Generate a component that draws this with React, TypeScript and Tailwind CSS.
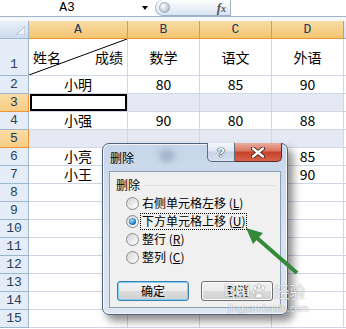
import React from 'react';

const cjk = "font-['Noto_Sans_CJK_SC',sans-serif]";
const mono = "font-['Liberation_Mono',monospace]";

const cols = [
  { l: 'A', w: 'w-[99px]' },
  { l: 'B', w: 'w-[72px]' },
  { l: 'C', w: 'w-[72px]' },
  { l: 'D', w: 'w-[72px]' },
];

type Row = { n: number; cells: string[]; sel?: boolean };

const rows: Row[] = [
  { n: 2, cells: ['小明', '80', '85', '90'] },
  { n: 3, cells: ['', '', '', ''], sel: true },
  { n: 4, cells: ['小强', '90', '80', '88'] },
  { n: 5, cells: ['', '', '', ''], sel: true },
  { n: 6, cells: ['小亮', '', '', '85'] },
  { n: 7, cells: ['小王', '', '', '90'] },
  { n: 8, cells: ['', '', '', ''] },
  { n: 9, cells: ['', '', '', ''] },
  { n: 10, cells: ['', '', '', ''] },
  { n: 11, cells: ['', '', '', ''] },
  { n: 12, cells: ['', '', '', ''] },
  { n: 13, cells: ['', '', '', ''] },
  { n: 14, cells: ['', '', '', ''] },
  { n: 15, cells: ['', '', '', ''] },
];

const options = [
  { t: '右侧单元格左移', k: 'L' },
  { t: '下方单元格上移', k: 'U', sel: true },
  { t: '整行', k: 'R' },
  { t: '整列', k: 'C' },
];

function RowHead({ n, sel, tall }: { n: number; sel?: boolean; tall?: boolean }) {
  return (
    <div
      className={`w-[29px] shrink-0 flex justify-center border-r border-b ${mono} text-[13px] ${
        sel
          ? 'bg-linear-to-b from-[#fadca4] to-[#f6cd84] border-[#f29436] text-[#1f3550]'
          : 'bg-[#e4ecf7] border-[#9eb6ce] text-[#2a3f5a]'
      } ${tall ? 'items-end pb-[1px]' : 'items-center'}`}
    >
      {n}
    </div>
  );
}

export default function App() {
  return (
    <div className={`relative w-[346px] h-[329px] overflow-hidden bg-white ${cjk}`}>
      {/* formula bar */}
      <div className="flex h-[17px] border-b border-[#a5b5c8] bg-white">
        <div className={`w-[134px] flex items-center justify-center ${mono} text-[13px] text-black`}>A3</div>
        <div className="w-[21px] flex items-center justify-center">
          <div className="w-0 h-0 border-l-[3px] border-r-[3px] border-t-[4px] border-l-transparent border-r-transparent border-t-black" />
        </div>
        <div className="w-[76px] flex items-center justify-between rounded-l-[9px] border border-t-0 border-[#9fb2c9] bg-linear-to-b from-white to-[#d9e4f1] pl-[3px] pr-[4px]">
          <div className="w-[11px] h-[11px] rounded-full border border-[#9aa9ba] bg-[radial-gradient(circle_at_35%_35%,#ffffff,#c3cedb_60%,#93a2b4)]" />
          <span className="font-['Liberation_Serif',serif] italic font-bold text-[13px] leading-none text-[#555]">
            f<span className="text-[10px]">x</span>
          </span>
        </div>
        <div className="flex-1" />
      </div>
      <div className="h-[4px] bg-[#f5f7fb]" />

      {/* column headers */}
      <div className="flex h-[18px]">
        <div className="w-[29px] relative border-r border-b border-[#9eb6ce] bg-linear-to-b from-[#e9eff8] to-[#cddbee]">
          <svg className="absolute right-[3px] bottom-[3px]" width="9" height="9" viewBox="0 0 9 9">
            <polygon points="9,0 9,9 0,9" fill="#eef2f7" stroke="#a9bbd0" strokeWidth="1" />
          </svg>
        </div>
        {cols.map((c) => (
          <div
            key={c.l}
            className={`${c.w} shrink-0 flex items-center justify-center border-r border-b border-[#f29436] bg-linear-to-b from-[#f9dca6] to-[#f2c46e] ${mono} text-[13px] text-[#203a5a]`}
          >
            {c.l}
          </div>
        ))}
        <div className="flex-1 border-b border-[#9eb6ce] bg-linear-to-b from-[#e9eff8] to-[#d3dff0]" />
      </div>

      {/* row 1 */}
      <div className="flex h-[37px]">
        <RowHead n={1} tall />
        <div className="w-[99px] shrink-0 relative flex items-center justify-between px-[4px] border-r border-b border-[#d0d7e5] text-[14px] text-black">
          <svg className="absolute inset-0" width="98" height="36" viewBox="0 0 98 36" preserveAspectRatio="none">
            <line x1="98" y1="0" x2="0" y2="36" stroke="#000" strokeWidth="1" />
          </svg>
          <span className="relative">姓名</span>
          <span className="relative">成绩</span>
        </div>
        {['数学', '语文', '外语'].map((t) => (
          <div key={t} className="w-[72px] shrink-0 flex items-center justify-center border-r border-b border-[#d0d7e5] text-[14px] text-black">
            {t}
          </div>
        ))}
        <div className="flex-1 border-b border-[#d0d7e5]" />
      </div>

      {/* other rows */}
      {rows.map((r) => (
        <div key={r.n} className="flex h-[18px]">
          <RowHead n={r.n} sel={r.sel} />
          {cols.map((c, i) => (
            <div
              key={c.l}
              className={`${c.w} shrink-0 flex items-center justify-center border-r border-b border-[#d0d7e5] text-[14px] text-black ${
                r.sel && !(r.n === 3 && i === 0) ? 'bg-[#e6e9f4]' : ''
              }`}
            >
              {r.n === 3 && i === 0 ? (
                <div className="w-[97px] h-[17px] border-2 border-black bg-white" />
              ) : (
                r.cells[i]
              )}
            </div>
          ))}
          <div className="flex-1 border-b border-[#d0d7e5]" />
        </div>
      ))}

      {/* dialog */}
      <div className="absolute left-[102px] top-[143px] w-[186px] h-[172px] flex flex-col rounded-[7px] border border-[#506179] bg-linear-to-b from-[#c6d6ea] via-[#d6e2ef] to-[#dce6f1] shadow-[inset_0_0_0_1px_rgba(255,255,255,0.75),5px_6px_9px_rgba(0,0,0,0.45)]">
        <span className="absolute left-[56px] top-[5px] w-[16px] h-[13px] rounded-full bg-[#8d9db1] opacity-60 blur-[3px]" />
        <div className="relative h-[27px] flex items-start justify-between pl-[7px] pr-[5px]">
          <span className="mt-[8px] text-[12px] leading-[12px] text-black">删除</span>
          <div className="flex -mt-[1px]">
            <div className="w-[28px] h-[19px] flex items-center justify-center rounded-bl-[5px] border border-t-0 border-[#5a6b80] bg-[linear-gradient(#f3f6fb,#dfe7f2_45%,#c5d3e5_50%,#d8e2ee)]">
              <span className="font-['Liberation_Sans',sans-serif] font-bold text-[13px] leading-none text-white [text-shadow:0_0_1px_#2c3440,0_0_1px_#2c3440,0_0_1px_#2c3440]">?</span>
            </div>
            <div className="w-[47px] h-[19px] flex items-center justify-center rounded-br-[5px] border border-t-0 border-l-0 border-[#5a2a22] bg-[linear-gradient(#eaae9f,#d9735c_45%,#c4402a_50%,#d8644b)]">
              <svg width="14" height="11" viewBox="0 0 14 11">
                <path d="M2 1.5 L12 9.5 M12 1.5 L2 9.5" stroke="#3d1a14" strokeWidth="4" strokeLinecap="round" />
                <path d="M2 1.5 L12 9.5 M12 1.5 L2 9.5" stroke="#ffffff" strokeWidth="2.4" strokeLinecap="round" />
              </svg>
            </div>
          </div>
        </div>

        <div className="mx-[6px] h-[137px] flex flex-col border border-[#8e9eb3] bg-[#f0f0f0] pt-[7px] pl-[6px] pr-[4px]">
          <div className="flex items-center h-[12px]">
            <span className="text-[12px] leading-[12px] text-black">删除</span>
            <div className="flex-1 ml-[4px] h-px bg-[#d5dfe5]" />
          </div>
          <div className="mt-[3px] flex flex-col">
            {options.map((o) => (
              <div key={o.k} className="h-[18px] flex items-center pl-[10px]">
                <span className="w-[13px] h-[13px] shrink-0 rounded-full border border-[#8a8a8a] bg-[linear-gradient(135deg,#d4d4d4,#ffffff)] flex items-center justify-center">
                  {o.sel && (
                    <span className="w-[7px] h-[7px] rounded-full bg-[radial-gradient(circle_at_40%_35%,#a6e4ff,#2a83c7_55%,#0d3f72)]" />
                  )}
                </span>
                <span
                  className={`ml-[1px] h-[17px] flex items-center px-[1px] border text-[12px] leading-[12px] text-black whitespace-nowrap ${
                    o.sel ? 'border-dotted border-black' : 'border-transparent'
                  }`}
                >
                  {o.t} (<u>{o.k}</u>)
                </span>
              </div>
            ))}
          </div>
          <div className="mt-[15px] flex gap-[12px] pl-[1px]">
            <button className="w-[72px] h-[20px] rounded-[3px] border border-[#3c7fb1] bg-[linear-gradient(#f2f2f2,#ebebeb_50%,#dddddd_50%,#cfcfcf)] shadow-[inset_0_0_0_1px_#7fd0f5] text-[12px] leading-none text-black">
              确定
            </button>
            <button className="w-[72px] h-[20px] rounded-[3px] border border-[#707070] bg-[linear-gradient(#f2f2f2,#ebebeb_50%,#dddddd_50%,#cfcfcf)] shadow-[inset_0_0_0_1px_#fcfcfc] text-[12px] leading-none text-black">
              取消
            </button>
          </div>
        </div>
      </div>

      {/* green arrow */}
      <svg className="absolute left-0 top-0 pointer-events-none" width="346" height="329" viewBox="0 0 346 329">
        <line x1="297" y1="273" x2="257" y2="238" stroke="#348a3a" strokeWidth="4" />
        <polygon points="246,228 263,233 253,244" fill="#348a3a" />
      </svg>

      {/* watermark */}
      <div className="absolute left-[224px] top-[282px] flex items-center text-white/85 [text-shadow:0_0_1px_rgba(0,0,0,0.45)] pointer-events-none">
        <span className="font-['Liberation_Sans',sans-serif] font-bold text-[17px] leading-none">Bai</span>
        <svg className="ml-[1px] opacity-85" width="16" height="16" viewBox="0 0 16 16">
          <g fill="#ffffff" stroke="#9a9a9a" strokeWidth="0.6">
            <ellipse cx="4" cy="5" rx="1.8" ry="2.3" />
            <ellipse cx="8" cy="3" rx="1.8" ry="2.3" />
            <ellipse cx="12" cy="5" rx="1.8" ry="2.3" />
            <ellipse cx="2.5" cy="9.5" rx="1.5" ry="2" />
            <path d="M4.5 13.5 C4.5 9 11.5 9 11.5 13.5 C11.5 15.5 4.5 15.5 4.5 13.5 Z" />
          </g>
        </svg>
        <span className="ml-[6px] text-[16px] leading-none">经验</span>
      </div>
      <div className="absolute left-[228px] top-[304px] font-['Liberation_Sans',sans-serif] text-[10px] leading-none text-white/85 [text-shadow:0_0_1px_rgba(0,0,0,0.45)] pointer-events-none">
        jingyan.baidu.com
      </div>
    </div>
  );
}
